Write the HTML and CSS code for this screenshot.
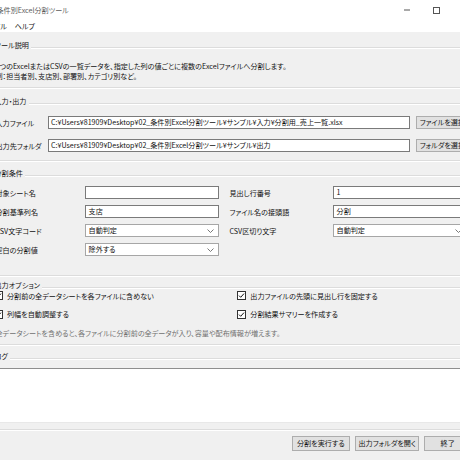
FILE: index.html
```html
<!DOCTYPE html>
<html lang="ja">
<head>
<meta charset="utf-8">
<title>条件別Excel分割ツール</title>
<link rel="stylesheet" href="styles.css">
</head>
<body>
<div class="window">
  <header class="titlebar">
    <span class="title">条件別Excel分割ツール</span>
    <div class="caption-btns">
      <span class="cap-btn"><svg width="6" height="2" viewBox="0 0 6 2"><line x1="0" y1="1" x2="6" y2="1" stroke="#555" stroke-width="1"/></svg></span>
      <span class="cap-btn"><svg width="7" height="7" viewBox="0 0 7 7"><rect x="0.5" y="0.5" width="6" height="6" fill="none" stroke="#555" stroke-width="1"/></svg></span>
      <span class="cap-btn"><svg width="7" height="7" viewBox="0 0 7 7"><path d="M0.5 0.5L6.5 6.5M6.5 0.5L0.5 6.5" stroke="#555" stroke-width="1"/></svg></span>
    </div>
  </header>

  <nav class="menubar">
    <span class="menu-item">ファイル</span>
    <span class="menu-item">ヘルプ</span>
  </nav>

  <main class="content">
    <section class="frame frame-desc">
      <div class="frame-head"><span class="frame-label">ツール説明</span><span class="frame-line"></span></div>
      <p class="desc">1つのExcelまたはCSVの一覧データを、指定した列の値ごとに複数のExcelファイルへ分割します。<br>例：担当者別、支店別、部署別、カテゴリ別など。</p>
    </section>

    <section class="frame frame-io">
      <div class="frame-head"><span class="frame-label">入力・出力</span><span class="frame-line"></span></div>
      <div class="io-grid">
        <span class="lbl">入力ファイル</span>
        <div class="entry">C:¥Users¥81909¥Desktop¥02_条件別Excel分割ツール¥サンプル¥入力¥分割用_売上一覧.xlsx</div>
        <button class="btn btn-pick">ファイルを選択</button>
        <span class="lbl">出力先フォルダ</span>
        <div class="entry">C:¥Users¥81909¥Desktop¥02_条件別Excel分割ツール¥サンプル¥出力</div>
        <button class="btn btn-pick">フォルダを選択</button>
      </div>
    </section>

    <section class="frame frame-cond">
      <div class="frame-head"><span class="frame-label">分割条件</span><span class="frame-line"></span></div>
      <div class="cond-grid">
        <span class="lbl">対象シート名</span>
        <div class="entry"></div>
        <span></span>
        <span class="lbl">見出し行番号</span>
        <div class="entry">1</div>

        <span class="lbl">分割基準列名</span>
        <div class="entry">支店</div>
        <span></span>
        <span class="lbl">ファイル名の接頭語</span>
        <div class="entry">分割</div>

        <span class="lbl">CSV文字コード</span>
        <div class="entry combo"><span>自動判定</span><svg class="chev" width="7" height="4" viewBox="0 0 7 4"><polyline points="0.5,0.5 3.5,3.5 6.5,0.5" fill="none" stroke="#6a6a6a" stroke-width="0.9"/></svg></div>
        <span></span>
        <span class="lbl">CSV区切り文字</span>
        <div class="entry combo"><span>自動判定</span><svg class="chev" width="7" height="4" viewBox="0 0 7 4"><polyline points="0.5,0.5 3.5,3.5 6.5,0.5" fill="none" stroke="#6a6a6a" stroke-width="0.9"/></svg></div>

        <span class="lbl">空白の分割値</span>
        <div class="entry combo"><span>除外する</span><svg class="chev" width="7" height="4" viewBox="0 0 7 4"><polyline points="0.5,0.5 3.5,3.5 6.5,0.5" fill="none" stroke="#6a6a6a" stroke-width="0.9"/></svg></div>
      </div>
    </section>

    <section class="frame frame-opt">
      <div class="frame-head"><span class="frame-label">出力オプション</span><span class="frame-line"></span></div>
      <div class="opts">
        <label class="check"><svg class="box" width="9" height="9" viewBox="0 0 9 9"><rect x="0.5" y="0.5" width="8" height="8" fill="#fff" stroke="#333" stroke-width="1"/><polyline points="2,4.6 3.7,6.3 7,2.6" fill="none" stroke="#111" stroke-width="1"/></svg><span>分割前の全データシートを各ファイルに含めない</span></label>
        <label class="check"><svg class="box" width="9" height="9" viewBox="0 0 9 9"><rect x="0.5" y="0.5" width="8" height="8" fill="#fff" stroke="#333" stroke-width="1"/><polyline points="2,4.6 3.7,6.3 7,2.6" fill="none" stroke="#111" stroke-width="1"/></svg><span>出力ファイルの先頭に見出し行を固定する</span></label>
        <label class="check"><svg class="box" width="9" height="9" viewBox="0 0 9 9"><rect x="0.5" y="0.5" width="8" height="8" fill="#fff" stroke="#333" stroke-width="1"/><polyline points="2,4.6 3.7,6.3 7,2.6" fill="none" stroke="#111" stroke-width="1"/></svg><span>列幅を自動調整する</span></label>
        <label class="check"><svg class="box" width="9" height="9" viewBox="0 0 9 9"><rect x="0.5" y="0.5" width="8" height="8" fill="#fff" stroke="#333" stroke-width="1"/><polyline points="2,4.6 3.7,6.3 7,2.6" fill="none" stroke="#111" stroke-width="1"/></svg><span>分割結果サマリーを作成する</span></label>
      </div>
      <p class="note">全データシートを含めると、各ファイルに分割前の全データが入り、容量や配布情報が増えます。</p>
    </section>

    <section class="frame frame-log">
      <div class="frame-head"><span class="frame-label">ログ</span><span class="frame-line"></span></div>
      <div class="log"></div>
    </section>

    <div class="actions">
      <button class="btn btn-run">分割を実行する</button>
      <button class="btn btn-open">出力フォルダを開く</button>
      <button class="btn btn-quit">終了</button>
    </div>
  </main>
</div>
</body>
</html>
```

FILE: styles.css
```css
* {
  box-sizing: border-box;
  margin: 0;
  padding: 0;
}

html,
body {
  width: 460px;
  height: 460px;
  overflow: hidden;
  background: #f0f0f0;
}

body {
  font-family: "Noto Sans CJK JP", "Noto Sans", sans-serif;
  font-size: 7.1px;
  font-feature-settings: "palt";
  color: #111;
}

/* window chrome: the window runs past the left edge of the view */
.window {
  width: 511px;
  margin-left: -30px;
  background: #f0f0f0;
}

.titlebar {
  height: 20px;
  background: #fff;
  display: flex;
  align-items: center;
}

.title {
  flex: 1;
  padding-left: 26.5px;
  line-height: 10px;
  color: #5c5c5c;
}

.caption-btns {
  display: flex;
  height: 20px;
}

.cap-btn {
  width: 29.5px;
  display: flex;
  align-items: center;
  justify-content: center;
}

.menubar {
  height: 12px;
  background: #fff;
  display: flex;
  align-items: flex-start;
  padding: 0.5px 0 0 12.5px;
  gap: 7.5px;
}

.menu-item {
  line-height: 10px;
}

/* label frames */
.frame {
  margin: 0 5px 0 16px;
  padding: 0 9.5px;
  border-bottom: 1px solid #dcdcdc;
  box-shadow: 0 1px 0 #fff;
}

.frame-head {
  display: flex;
  align-items: flex-start;
  height: 10px;
  margin-left: -1px;
  margin-right: -9.5px;
}

.frame-label {
  line-height: 10px;
  padding-right: 2.5px;
  color: #111;
}

.frame-line {
  flex: 1;
  height: 0;
  margin-top: 7px;
  border-top: 1px solid #dcdcdc;
  box-shadow: 0 1px 0 #fff;
}

.frame-desc {
  margin-top: 8px;
  padding-bottom: 5.25px;
}

.desc {
  margin-top: 10.75px;
  line-height: 10.5px;
  white-space: nowrap;
}

.frame-io {
  margin-top: 7.7px;
  padding-bottom: 7.5px;
}

.frame-cond {
  margin-top: 6.7px;
  padding-bottom: 18.5px;
}

.frame-opt {
  margin-top: 4.5px;
  padding-bottom: 6px;
}

.frame-log {
  margin-top: 6.2px;
  padding-bottom: 6px;
}

.lbl {
  line-height: 10px;
  white-space: nowrap;
}

/* text fields */
.entry {
  height: 12.5px;
  background: #fff;
  border: 1px solid #7a7a7a;
  padding-left: 2.3px;
  line-height: 10.5px;
  white-space: nowrap;
  overflow: hidden;
}

.combo {
  display: flex;
  align-items: center;
  justify-content: space-between;
  padding-right: 3.5px;
  border-color: #a6a6a6;
}

.combo span {
  line-height: 10.5px;
}

.chev {
  flex: none;
}

.btn {
  font: inherit;
  font-feature-settings: "palt";
  color: #111;
  background: #e1e1e1;
  border: 1px solid #adadad;
  height: 13.5px;
  line-height: 11px;
  white-space: nowrap;
}

.io-grid {
  margin-top: 10.3px;
  display: grid;
  grid-template-columns: 52.2px 362.3px auto;
  row-gap: 9.5px;
  align-items: center;
}

.btn-pick {
  margin-left: 5.7px;
  padding: 0 3px;
  text-align: left;
}

.cond-grid {
  margin-top: 8.3px;
  display: grid;
  grid-template-columns: 89.8px 133.7px 10.5px 103.8px 133px;
  grid-auto-rows: 13.3px;
  row-gap: 5.7px;
  align-items: center;
}

.cond-grid .entry {
  height: 13.3px;
}

/* option checkboxes */
.opts {
  margin-top: 0.7px;
  margin-left: -1.5px;
  display: grid;
  grid-template-columns: 243.3px auto;
  row-gap: 8.3px;
}

.check {
  display: flex;
  align-items: center;
  gap: 4px;
  height: 10px;
  line-height: 10px;
  white-space: nowrap;
}

.box {
  flex: none;
}

.note {
  margin-top: 8.3px;
  line-height: 10px;
  color: #707070;
  white-space: nowrap;
}

.log {
  margin-top: 7.8px;
  height: 54.2px;
  background: #fff;
  border-top: 1px solid #8e8e8e;
  border-bottom: 1px solid #e8e8e8;
}

/* bottom action buttons */
.actions {
  display: flex;
  justify-content: flex-end;
  gap: 5px;
  margin-top: 6.5px;
  padding-right: 10px;
}

.actions .btn {
  height: 14.7px;
  text-align: center;
}

.btn-run {
  width: 58.3px;
}

.btn-open {
  width: 64.3px;
}

.btn-quit {
  width: 46.7px;
}
```
